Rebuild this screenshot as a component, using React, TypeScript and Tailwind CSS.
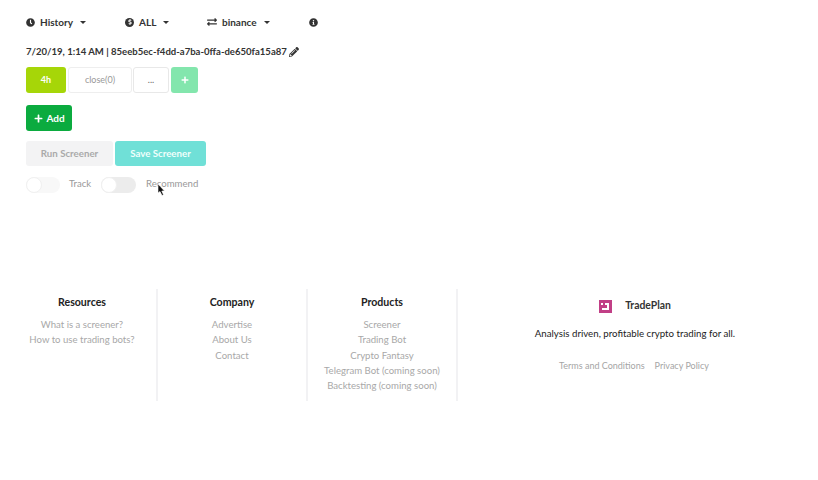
import { FaClock, FaInfoCircle, FaPencilAlt, FaPlus, FaExchangeAlt, FaDollarSign } from "react-icons/fa";

function Caret() {
  return <span className="ml-[7px] inline-block w-0 h-0 border-x-[3px] border-x-transparent border-t-[3px] border-t-[#333]" />;
}

function Toggle({ on, wide }: { on?: boolean; wide?: boolean }) {
  return (
    <div className={`relative ${wide ? "w-[35px]" : "w-[34px]"} h-[16px] rounded-full ${on ? "bg-[#ececec]" : "bg-[#f8f8f8]"}`}>
      <div className="absolute left-0 top-0 w-[16px] h-[16px] rounded-full bg-white border border-[#f0f0f0]" />
    </div>
  );
}

function FooterCol({ title, links }: { title: string; links: string[] }) {
  return (
    <div className="w-[150px] h-[112px] text-center pt-[6px] border-r-2 border-[#f2f2f4]">
      <div className="text-[10.6px] leading-[14px] font-bold text-[#222] mb-[8px]">{title}</div>
      {links.map((l) => (
        <div key={l} className="text-[9.6px] leading-[15.25px] text-[#a8a8a8] whitespace-nowrap">{l}</div>
      ))}
    </div>
  );
}

export default function App() {
  return (
    <div className="w-[818px] h-[480px] bg-white overflow-hidden font-['Lato','Liberation_Sans',sans-serif]">
      <div className="pl-[26px] pt-[15px]">
        <div className="flex items-center h-[14px] text-[10px] font-bold text-[#333]">
          <div className="flex items-center w-[99px]">
            <FaClock className="text-[9px] mr-[5px] text-[#333]" />
            <span>History</span>
            <Caret />
          </div>
          <div className="flex items-center w-[82px]">
            <span className="w-[9px] h-[9px] rounded-full bg-[#333] mr-[5px] flex items-center justify-center">
              <FaDollarSign className="text-[6px] text-white" />
            </span>
            <span>ALL</span>
            <Caret />
          </div>
          <div className="flex items-center w-[102px]">
            <FaExchangeAlt className="text-[10px] mr-[5px] text-[#333]" />
            <span>binance</span>
            <Caret />
          </div>
          <FaInfoCircle className="text-[9px] text-[#333]" />
        </div>

        <div className="flex items-center mt-[16px] h-[14px] text-[9.55px] font-bold text-[#333] whitespace-nowrap">
          <span>7/20/19, 1:14 AM | 85eeb5ec-f4dd-a7ba-0ffa-de650fa15a87</span>
          <FaPencilAlt className="text-[10px] ml-[2px] text-[#333]" />
        </div>

        <div className="flex items-center mt-[8px] text-[9px] h-[26px]">
          <div className="w-[40px] h-[26px] rounded-[3px] bg-[#a6d608] text-white font-bold flex items-center justify-center">4h</div>
          <div className="ml-[2px] w-[64px] h-[26px] rounded-[3px] bg-white border border-[#eeeeee] text-[#999] flex items-center justify-center">close(0)</div>
          <div className="ml-[1px] w-[36px] h-[26px] rounded-[3px] bg-white border border-[#e8e8e8] text-[#666] flex items-center justify-center">...</div>
          <div className="ml-[2px] w-[27px] h-[26px] rounded-[3px] bg-[#83e6ad] text-white flex items-center justify-center">
            <FaPlus className="text-[8px]" />
          </div>
        </div>

        <div className="mt-[12px] w-[46px] h-[26px] rounded-[3px] bg-[#0bab3f] text-white text-[10px] font-bold flex items-center justify-center pl-[1px]">
          <FaPlus className="text-[9px] mr-[3px]" />
          Add
        </div>

        <div className="flex mt-[10px] h-[25px] text-[9.7px] font-bold">
          <div className="w-[87px] rounded-[3px] bg-[#f3f3f4] text-[#aaaaaa] flex items-center justify-center">Run Screener</div>
          <div className="ml-[2px] w-[91px] rounded-[3px] bg-[#70e0d7] text-[#effffc] flex items-center justify-center">Save Screener</div>
        </div>

        <div className="flex items-center mt-[10px] h-[17px] text-[9.6px] text-[#999]">
          <Toggle />
          <span className="ml-[9px] w-[32px]">Track</span>
          <Toggle on wide />
          <span className="ml-[10px] relative">
            Recommend
            <svg className="absolute left-[11px] top-[6px]" width="9" height="14" viewBox="0 0 9 14">
              <path d="M1 1 L1 10 L3 8.5 L5 12.5 L6.5 11.8 L4.8 8 L7.5 8 Z" fill="#111" stroke="#fff" strokeWidth="0.6" />
            </svg>
          </span>
        </div>
      </div>

      <div className="flex mt-[96px] ml-[8px]">
        <FooterCol title="Resources" links={["What is a screener?", "How to use trading bots?"]} />
        <FooterCol title="Company" links={["Advertise", "About Us", "Contact"]} />
        <FooterCol title="Products" links={["Screener", "Trading Bot", "Crypto Fantasy", "Telegram Bot (coming soon)", "Backtesting (coming soon)"]} />
        <div className="w-[354px] text-center pt-[7px]">
          <div className="flex items-center justify-center h-[20px]">
            <svg width="13" height="13" viewBox="0 0 13 13" className="mr-[13px]">
              <path d="M0 0H13V13H0Z" fill="#c13f86" />
              <path d="M6 3H10V10H3V8H8V5H6Z" fill="#fff" />
              <path d="M2 3H4V5H2Z" fill="#fff" />
            </svg>
            <span className="text-[10.4px] font-bold text-[#333]">TradePlan</span>
          </div>
          <div className="mt-[10px] text-[9.7px] leading-[14px] text-[#222]">Analysis driven, profitable crypto trading for all.</div>
          <div className="mt-[19px] flex justify-center gap-[10px] text-[9px] leading-[14px] text-[#a5a5a5] pr-[2px]">
            <span>Terms and Conditions</span>
            <span>Privacy Policy</span>
          </div>
        </div>
      </div>
    </div>
  );
}
